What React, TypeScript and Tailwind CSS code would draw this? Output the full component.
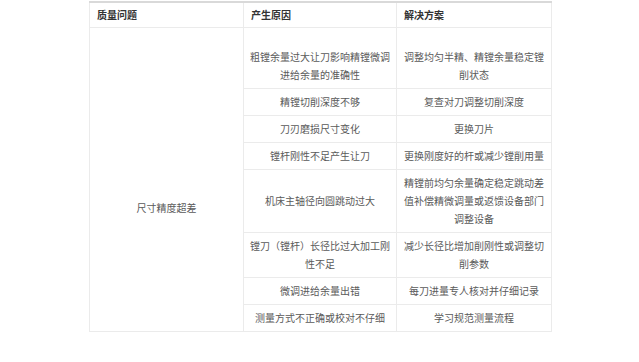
import React from 'react';

type Row = { cause: string; fix: string; padTop?: boolean };

const rows: Row[] = [
  { cause: '粗镗余量过大让刀影响精镗微调进给余量的准确性', fix: '调整均匀半精、精镗余量稳定镗削状态', padTop: true },
  { cause: '精镗切削深度不够', fix: '复查对刀调整切削深度' },
  { cause: '刀刃磨损尺寸变化', fix: '更换刀片' },
  { cause: '镗杆刚性不足产生让刀', fix: '更换刚度好的杆或减少镗削用量' },
  { cause: '机床主轴径向圆跳动过大', fix: '精镗前均匀余量确定稳定跳动差值补偿精微调量或返馈设备部门调整设备' },
  { cause: '镗刀（镗杆）长径比过大加工刚性不足', fix: '减少长径比增加削刚性或调整切削参数' },
  { cause: '微调进给余量出错', fix: '每刀进量专人核对并仔细记录' },
  { cause: '测量方式不正确或校对不仔细', fix: '学习规范测量流程' },
];

export default function App() {
  return (
    <div
      className="w-[639px] h-[362px] bg-white pl-[89px] pt-[1px]"
      style={{ fontFamily: '"Noto Sans CJK SC", "Noto Sans", sans-serif' }}
    >
      <table className="w-[462px] table-fixed border-collapse text-[10px] leading-[18px] text-[#5a5a5a]">
        <colgroup>
          <col className="w-[154px]" />
          <col className="w-[153px]" />
          <col className="w-[155px]" />
        </colgroup>
        <thead>
          <tr className="border-t-2 border-t-[#d9d9d9]">
            <th className="h-[25px] border border-[#ebebeb] border-t-[#d9d9d9] px-[7px] text-left font-bold text-[#333]">质量问题</th>
            <th className="h-[25px] border border-[#ebebeb] border-t-[#d9d9d9] px-[7px] text-left font-bold text-[#333]">产生原因</th>
            <th className="h-[25px] border border-[#ebebeb] border-t-[#d9d9d9] px-[7px] text-left font-bold text-[#333]">解决方案</th>
          </tr>
        </thead>
        <tbody>
          {rows.map((r, i) => (
            <tr key={i}>
              {i === 0 && (
                <td
                  rowSpan={rows.length}
                  className="border border-[#ebebeb] px-[6px] pt-[58px] text-center align-middle"
                >
                  尺寸精度超差
                </td>
              )}
              <td className={`border border-[#ebebeb] px-[6px] py-[4px] text-center ${r.padTop ? 'pt-[20px]' : ''}`}>
                {r.cause}
              </td>
              <td className={`border border-[#ebebeb] px-[6px] py-[4px] text-center ${r.padTop ? 'pt-[20px]' : ''}`}>
                {r.fix}
              </td>
            </tr>
          ))}
        </tbody>
      </table>
    </div>
  );
}
